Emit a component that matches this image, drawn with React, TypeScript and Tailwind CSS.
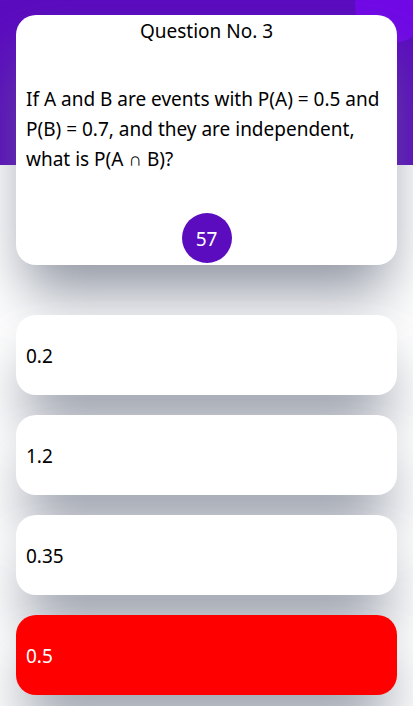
const cardShadow = 'shadow-[0_36px_56px_-9px_rgba(104,112,130,0.75)]';

const options = [
  { label: '0.2', wrong: false },
  { label: '1.2', wrong: false },
  { label: '0.35', wrong: false },
  { label: '0.5', wrong: true },
];

export default function App() {
  return (
    <div className="relative isolate h-screen overflow-hidden bg-white font-['Noto_Sans',sans-serif] text-[19px] leading-[30px] text-black">
      <div className="absolute inset-x-0 top-0 -z-10 h-[165px] overflow-hidden bg-[#5b0cbf]">
        <div className="absolute -top-[31px] -right-[16px] size-[74px] rounded-full bg-[#7009e6]" />
      </div>
      <main className="px-4 pt-[15px]">
        <section className={`flex h-[250px] flex-col rounded-[20px] bg-white ${cardShadow}`}>
          <h1 className="pt-px text-center">Question No. 3</h1>
          <p className="mt-[38px] px-[10px]">
            If A and B are events with P(A) = 0.5 and P(B) = 0.7, and they are independent, what is P(A ∩ B)?
          </p>
          <div className="mt-auto mb-[2px] flex size-[50px] items-center justify-center self-center rounded-full bg-[#5b0cbf] pt-[2px] text-white">
            57
          </div>
        </section>
        <div className="mt-[50px] flex flex-col gap-5">
          {options.map((option) => (
            <button
              key={option.label}
              type="button"
              className={`h-20 w-full rounded-[20px] px-[10px] pt-[2px] text-left ${cardShadow} ${option.wrong ? 'bg-[#ff0000] text-white' : 'bg-white'}`}
            >
              {option.label}
            </button>
          ))}
        </div>
      </main>
    </div>
  );
}
